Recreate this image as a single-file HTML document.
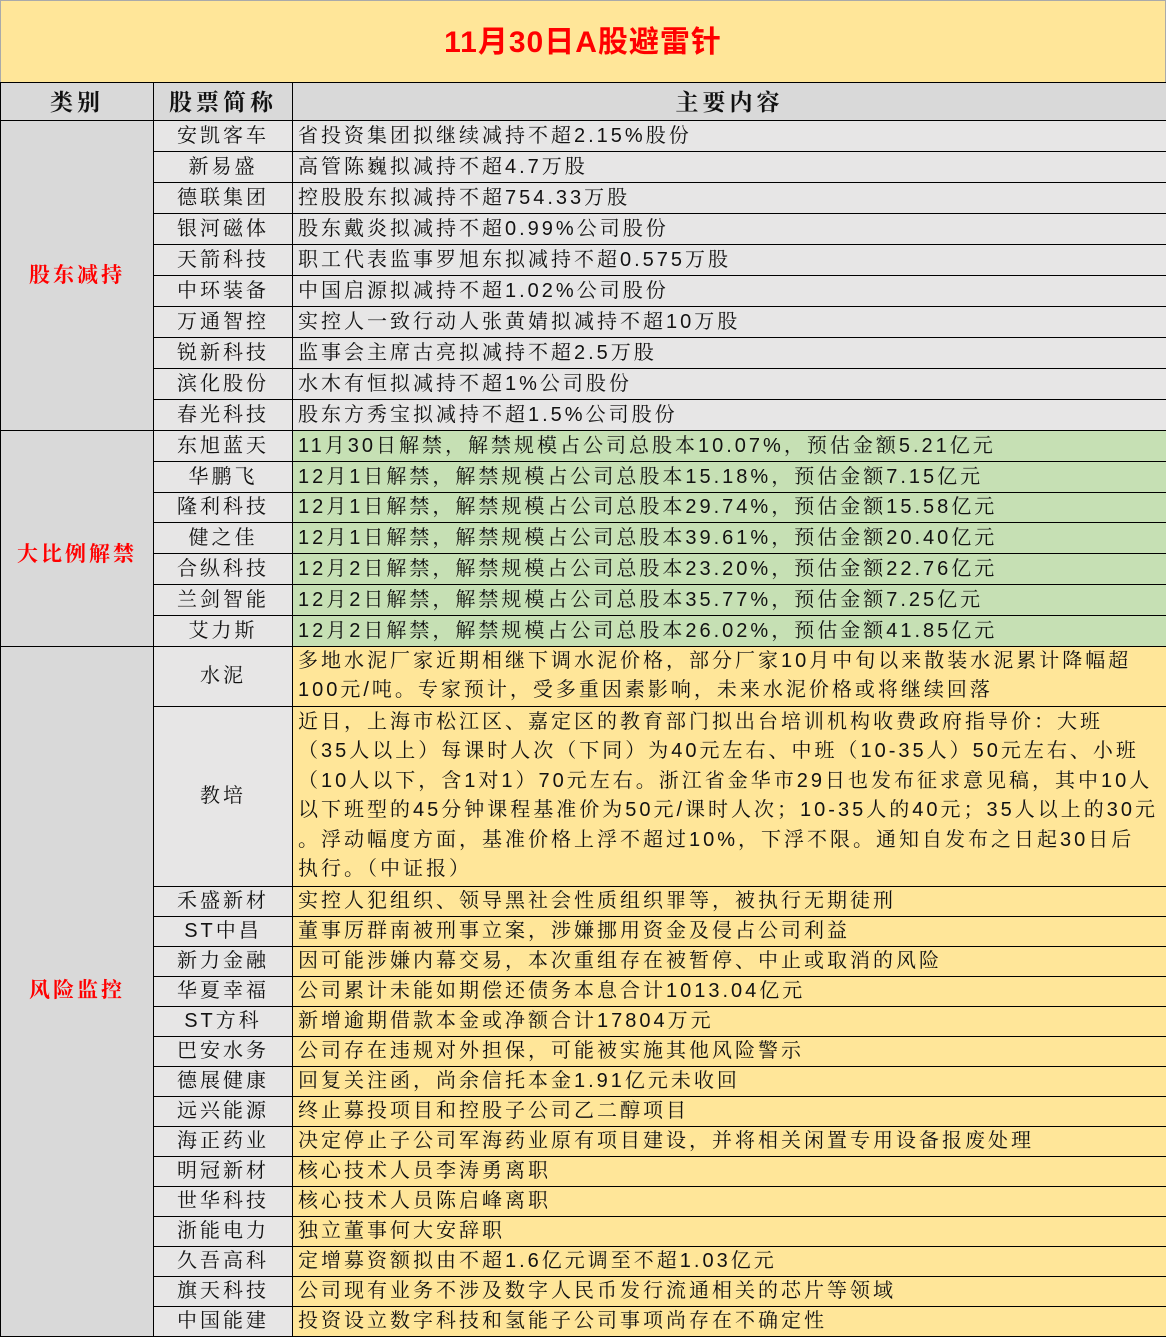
<!DOCTYPE html>
<html><head><meta charset="utf-8"><style>
*{margin:0;padding:0;box-sizing:border-box}
body{width:1166px;height:1337px;background:#fff;overflow:hidden;font-family:"Liberation Sans","Noto Serif CJK SC","Noto Sans CJK SC",serif;position:relative}
table{border-collapse:collapse;table-layout:fixed;width:1166px;position:absolute;left:0;top:82px}
td{border:1px solid #000;font-size:20px;letter-spacing:3px;color:#111;white-space:nowrap;overflow:hidden;padding:0;line-height:24px}
.title{position:absolute;left:0;top:0;width:1166px;height:82px;background:#FFE699;border:1px solid #aaa;border-bottom:none;color:#f00;font-weight:bold;font-size:30px;text-align:center;line-height:84px;letter-spacing:1px;font-family:"Liberation Sans","Noto Sans CJK SC",sans-serif}
.h td{background:#D9D9D9;height:38px;font-weight:bold;font-size:23px;text-align:center;letter-spacing:4px}
.cat{background:#D9D9D9;color:#f00;font-weight:bold;text-align:center;font-size:21px}
.n{background:#E7E6E6;text-align:center}
.g{background:#E7E6E6;padding-left:5px}
.gr{background:#C6E0B4;padding-left:5px}
.y{background:#FFE699;padding-left:5px}
.m{line-height:29.5px}
.r1 td{height:31px}
.r2 td{height:30.8px}
.r3 td{height:30px}
</style></head><body>
<div class="title">11月30日A股避雷针</div>
<table>
<colgroup><col style="width:153px"><col style="width:139px"><col style="width:874px"></colgroup>
<tr class="h"><td>类别</td><td>股票简称</td><td>主要内容</td></tr>
<tr class="r1"><td class="cat" rowspan="10">股东减持</td><td class="n">安凯客车</td><td class="g">省投资集团拟继续减持不超2.15%股份</td></tr>
<tr class="r1"><td class="n">新易盛</td><td class="g">高管陈巍拟减持不超4.7万股</td></tr>
<tr class="r1"><td class="n">德联集团</td><td class="g">控股股东拟减持不超754.33万股</td></tr>
<tr class="r1"><td class="n">银河磁体</td><td class="g">股东戴炎拟减持不超0.99%公司股份</td></tr>
<tr class="r1"><td class="n">天箭科技</td><td class="g">职工代表监事罗旭东拟减持不超0.575万股</td></tr>
<tr class="r1"><td class="n">中环装备</td><td class="g">中国启源拟减持不超1.02%公司股份</td></tr>
<tr class="r1"><td class="n">万通智控</td><td class="g">实控人一致行动人张黄婧拟减持不超10万股</td></tr>
<tr class="r1"><td class="n">锐新科技</td><td class="g">监事会主席古亮拟减持不超2.5万股</td></tr>
<tr class="r1"><td class="n">滨化股份</td><td class="g">水木有恒拟减持不超1%公司股份</td></tr>
<tr class="r1"><td class="n">春光科技</td><td class="g">股东方秀宝拟减持不超1.5%公司股份</td></tr>
<tr class="r2"><td class="cat" rowspan="7" style="padding-top:34px">大比例解禁</td><td class="n">东旭蓝天</td><td class="gr">11月30日解禁，解禁规模占公司总股本10.07%，预估金额5.21亿元</td></tr>
<tr class="r2"><td class="n">华鹏飞</td><td class="gr">12月1日解禁，解禁规模占公司总股本15.18%，预估金额7.15亿元</td></tr>
<tr class="r2"><td class="n">隆利科技</td><td class="gr">12月1日解禁，解禁规模占公司总股本29.74%，预估金额15.58亿元</td></tr>
<tr class="r2"><td class="n">健之佳</td><td class="gr">12月1日解禁，解禁规模占公司总股本39.61%，预估金额20.40亿元</td></tr>
<tr class="r2"><td class="n">合纵科技</td><td class="gr">12月2日解禁，解禁规模占公司总股本23.20%，预估金额22.76亿元</td></tr>
<tr class="r2"><td class="n">兰剑智能</td><td class="gr">12月2日解禁，解禁规模占公司总股本35.77%，预估金额7.25亿元</td></tr>
<tr class="r2"><td class="n">艾力斯</td><td class="gr">12月2日解禁，解禁规模占公司总股本26.02%，预估金额41.85亿元</td></tr>
<tr><td class="cat" rowspan="17">风险监控</td><td class="n" style="height:60px">水泥</td><td class="y m">多地水泥厂家近期相继下调水泥价格，部分厂家10月中旬以来散装水泥累计降幅超<br>100元/吨。专家预计，受多重因素影响，未来水泥价格或将继续回落</td></tr>
<tr><td class="n" style="height:180px">教培</td><td class="y m">近日，上海市松江区、嘉定区的教育部门拟出台培训机构收费政府指导价：大班<br>（35人以上）每课时人次（下同）为40元左右、中班（10-35人）50元左右、小班<br>（10人以下，含1对1）70元左右。浙江省金华市29日也发布征求意见稿，其中10人<br>以下班型的45分钟课程基准价为50元/课时人次；10-35人的40元；35人以上的30元<br>。浮动幅度方面，基准价格上浮不超过10%，下浮不限。通知自发布之日起30日后<br>执行。（中证报）</td></tr>
<tr class="r3"><td class="n">禾盛新材</td><td class="y">实控人犯组织、领导黑社会性质组织罪等，被执行无期徒刑</td></tr>
<tr class="r3"><td class="n">ST中昌</td><td class="y">董事厉群南被刑事立案，涉嫌挪用资金及侵占公司利益</td></tr>
<tr class="r3"><td class="n">新力金融</td><td class="y">因可能涉嫌内幕交易，本次重组存在被暂停、中止或取消的风险</td></tr>
<tr class="r3"><td class="n">华夏幸福</td><td class="y">公司累计未能如期偿还债务本息合计1013.04亿元</td></tr>
<tr class="r3"><td class="n">ST方科</td><td class="y">新增逾期借款本金或净额合计17804万元</td></tr>
<tr class="r3"><td class="n">巴安水务</td><td class="y">公司存在违规对外担保，可能被实施其他风险警示</td></tr>
<tr class="r3"><td class="n">德展健康</td><td class="y">回复关注函，尚余信托本金1.91亿元未收回</td></tr>
<tr class="r3"><td class="n">远兴能源</td><td class="y">终止募投项目和控股子公司乙二醇项目</td></tr>
<tr class="r3"><td class="n">海正药业</td><td class="y">决定停止子公司军海药业原有项目建设，并将相关闲置专用设备报废处理</td></tr>
<tr class="r3"><td class="n">明冠新材</td><td class="y">核心技术人员李涛勇离职</td></tr>
<tr class="r3"><td class="n">世华科技</td><td class="y">核心技术人员陈启峰离职</td></tr>
<tr class="r3"><td class="n">浙能电力</td><td class="y">独立董事何大安辞职</td></tr>
<tr class="r3"><td class="n">久吾高科</td><td class="y">定增募资额拟由不超1.6亿元调至不超1.03亿元</td></tr>
<tr class="r3"><td class="n">旗天科技</td><td class="y">公司现有业务不涉及数字人民币发行流通相关的芯片等领域</td></tr>
<tr class="r3"><td class="n">中国能建</td><td class="y">投资设立数字科技和氢能子公司事项尚存在不确定性</td></tr>
</table>
</body></html>
